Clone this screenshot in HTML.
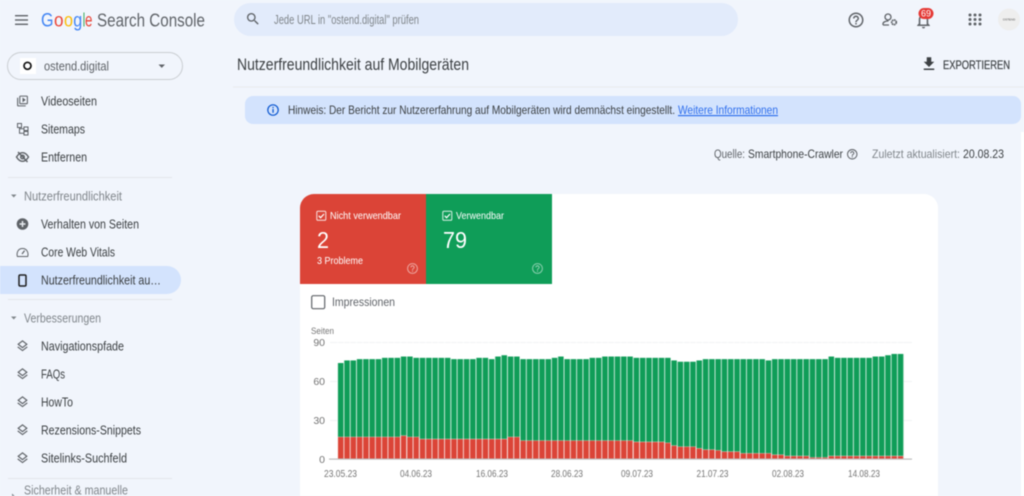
<!DOCTYPE html>
<html lang="de">
<head>
<meta charset="utf-8">
<title>Google Search Console</title>
<style>
html,body{margin:0;padding:0;background:#f1f5fc;overflow:hidden;width:1024px;height:496px}
svg{display:block;filter:blur(.4px)}
text{font-family:"Liberation Sans",Arial,sans-serif;font-size:12px;fill:#444746}
.n{font-size:12.5px;fill:#3c4043}
.s{font-size:12.5px;fill:#80868b}
.a{font-size:10.5px;fill:#757575}
.lg{font-size:19px}
</style>
</head>
<body>
<svg width="1024" height="496" viewBox="0 0 1024 496" xmlns="http://www.w3.org/2000/svg">
<defs>
<symbol id="help" viewBox="0 0 24 24"><path d="M11 18h2v-2h-2v2zm1-16C6.48 2 2 6.48 2 12s4.48 10 10 10 10-4.48 10-10S17.52 2 12 2zm0 18c-4.41 0-8-3.59-8-8s3.59-8 8-8 8 3.59 8 8-3.59 8-8 8zm0-14c-2.21 0-4 1.79-4 4h2c0-1.1.9-2 2-2s2 .9 2 2c0 2-3 1.75-3 5h2c0-2.25 3-2.5 3-5 0-2.21-1.79-4-4-4z"/></symbol>
<symbol id="layers" viewBox="0 0 24 24"><path fill="#5f6368" d="M11.99 18.54l-7.37-5.73L3 14.07l9 7 9-7-1.63-1.27zM12 16l7.36-5.73L21 9l-9-7-9 7 1.63 1.27L12 16zm0-11.47L17.74 9 12 13.47 6.26 9 12 4.53z"/></symbol>
<pattern id="gaps" patternUnits="userSpaceOnUse" x="337.1" y="0" width="6.29" height="10"><rect x="0" y="0" width="1" height="10" fill="#fff" fill-opacity=".75"/></pattern>
</defs>

<rect width="1024" height="496" fill="#f1f5fc"/>

<!-- header -->
<g fill="#5f6368"><rect x="15" y="15" width="13" height="1.4"/><rect x="15" y="19.3" width="13" height="1.4"/><rect x="15" y="23.6" width="13" height="1.4"/></g>
<text x="41" y="26.5" class="lg" textLength="12.5" lengthAdjust="spacingAndGlyphs" style="fill:#4285f4">G</text>
<text x="54" y="26.5" class="lg" textLength="9.5" lengthAdjust="spacingAndGlyphs" style="fill:#ea4335">o</text>
<text x="64" y="26.5" class="lg" textLength="9" lengthAdjust="spacingAndGlyphs" style="fill:#fbbc05">o</text>
<text x="73.3" y="26.5" class="lg" textLength="9" lengthAdjust="spacingAndGlyphs" style="fill:#4285f4">g</text>
<text x="82.8" y="26.5" class="lg" textLength="2.4" lengthAdjust="spacingAndGlyphs" style="fill:#34a853">l</text>
<text x="85" y="26.5" class="lg" textLength="7.4" lengthAdjust="spacingAndGlyphs" style="fill:#ea4335">e</text>
<text x="97" y="26.5" textLength="108" lengthAdjust="spacingAndGlyphs" style="font-size:18.5px;fill:#5f6368">Search Console</text>

<rect x="234" y="3" width="504" height="33" rx="16.5" fill="#e2ebfb"/>
<svg x="245" y="11" width="16" height="16" viewBox="0 0 24 24"><path fill="#5f6368" d="M15.5 14h-.79l-.28-.27C15.41 12.59 16 11.11 16 9.5 16 5.91 13.09 3 9.5 3S3 5.91 3 9.5 5.91 16 9.5 16c1.61 0 3.09-.59 4.23-1.57l.27.28v.79l5 4.99L20.49 19l-4.99-5zm-6 0C7.01 14 5 11.99 5 9.5S7.01 5 9.5 5 14 7.01 14 9.5 11.99 14 9.5 14z"/></svg>
<text x="274" y="24" textLength="145" lengthAdjust="spacingAndGlyphs" style="font-size:13px;fill:#80868b">Jede URL in "ostend.digital" prüfen</text>

<use href="#help" x="847" y="11" width="18" height="18" fill="#5f6368"/>
<!-- manage user -->
<g fill="none" stroke="#5f6368" stroke-width="1.3"><circle cx="888" cy="17" r="3"/><path d="M883 25v-1.2c0-1.8 2.6-2.8 5.5-2.8M883 25h6"/></g>
<circle cx="894" cy="22.3" r="2.3" fill="none" stroke="#5f6368" stroke-width="1.7" stroke-dasharray="1.6 .5"/>
<!-- bell -->
<svg x="914" y="11" width="19" height="19" viewBox="0 0 24 24"><path fill="#5f6368" d="M18 16v-5c0-3.07-1.63-5.64-4.5-6.32V4c0-.83-.67-1.5-1.5-1.5s-1.5.67-1.5 1.5v.68C7.64 5.36 6 7.92 6 11v5l-2 2v1h16v-1l-2-2zm-2 1H8v-6c0-2.48 1.51-4.5 4-4.5s4 2.02 4 4.5v6zM12 22c1.1 0 2-.9 2-2h-4c0 1.1.9 2 2 2z"/></svg>
<rect x="918.5" y="8" width="15" height="11" rx="5.5" fill="#e53935"/>
<text x="926" y="16.6" text-anchor="middle" style="font-size:9px;fill:#fff">69</text>
<!-- apps -->
<g fill="#5f6368"><circle cx="970" cy="15" r="1.5"/><circle cx="975" cy="15" r="1.5"/><circle cx="980" cy="15" r="1.5"/><circle cx="970" cy="19.5" r="1.5"/><circle cx="975" cy="19.5" r="1.5"/><circle cx="980" cy="19.5" r="1.5"/><circle cx="970" cy="24" r="1.5"/><circle cx="975" cy="24" r="1.5"/><circle cx="980" cy="24" r="1.5"/></g>
<circle cx="1009" cy="19.5" r="11" fill="#eeeeee"/>
<text x="1009" y="20.5" text-anchor="middle" style="font-size:3px;fill:#555">OSTEND</text>

<!-- sidebar -->
<rect x="7.5" y="52.5" width="175" height="27" rx="13.5" fill="#f1f5fc" stroke="#c9cdd1"/>
<rect x="20" y="58" width="16" height="16" fill="#fff"/>
<circle cx="27.5" cy="65.8" r="3.5" fill="none" stroke="#111" stroke-width="1.7"/>
<text x="44" y="70.5" textLength="65" lengthAdjust="spacingAndGlyphs" style="font-size:12.5px;fill:#5f6368">ostend.digital</text>
<path d="M158.5 64.5h6.5l-3.25 3.4z" fill="#5f6368"/>

<!-- Videoseiten icon -->
<svg x="16" y="94.5" width="13" height="13" viewBox="0 0 24 24"><path fill="#5f6368" d="M4 6H2v14c0 1.1.9 2 2 2h14v-2H4V6zm16-4H8c-1.1 0-2 .9-2 2v12c0 1.1.9 2 2 2h12c1.1 0 2-.9 2-2V4c0-1.1-.9-2-2-2zm0 14H8V4h12v12zM12 5.5v9l6-4.5z"/></svg>
<text x="41" y="105.5" textLength="56" lengthAdjust="spacingAndGlyphs" class="n">Videoseiten</text>
<!-- Sitemap icon -->
<g fill="none" stroke="#5f6368" stroke-width="1"><rect x="17.5" y="123.5" width="4" height="4"/><rect x="24" y="127" width="4" height="3.5"/><rect x="24" y="131.5" width="4" height="3.5"/><path d="M19.5 127.5v5.7h4.5M19.5 128.7h4.5"/></g>
<text x="41" y="133.5" textLength="44" lengthAdjust="spacingAndGlyphs" class="n">Sitemaps</text>
<!-- Eye off -->
<g fill="none" stroke="#5f6368" stroke-width="1.4"><path d="M16.5 157c2-3.2 4-4.3 6-4.3s4 1.1 6 4.3c-2 3.2-4 4.3-6 4.3s-4-1.1-6-4.3z"/><circle cx="22.5" cy="157" r="1.8"/><path d="M18 152l9.5 10"/></g>
<text x="41" y="161.5" textLength="46" lengthAdjust="spacingAndGlyphs" class="n">Entfernen</text>

<rect x="8" y="177" width="164" height="1" fill="#e3e6eb"/>
<path d="M11 194.5h5.5l-2.75 3z" fill="#80868b"/>
<text x="24" y="200.5" textLength="98" lengthAdjust="spacingAndGlyphs" class="s">Nutzerfreundlichkeit</text>

<circle cx="22.5" cy="224" r="5.8" fill="#5f6368"/>
<path d="M22.5 221v6M19.5 224h6" stroke="#e8ebf0" stroke-width="1.5"/>
<text x="41" y="228.5" textLength="98" lengthAdjust="spacingAndGlyphs" class="n">Verhalten von Seiten</text>
<g fill="none" stroke="#5f6368" stroke-width="1"><path d="M17.4 256.5h10.3c1-3.5-.5-8-5.2-8s-6.1 4.5-5.1 8z"/><path d="M22 254l2.6-3.4" stroke-width="1.2"/></g>
<text x="41" y="256.5" textLength="74" lengthAdjust="spacingAndGlyphs" class="n">Core Web Vitals</text>

<path d="M0 266H167a14 14 0 0 1 0 28H0z" fill="#d3e3fd"/>
<rect x="19" y="275" width="7" height="11" rx="1.2" fill="none" stroke="#1f1f1f" stroke-width="1.5"/>
<text x="41" y="284.5" textLength="120" lengthAdjust="spacingAndGlyphs" class="n">Nutzerfreundlichkeit au…</text>

<rect x="8" y="299" width="164" height="1" fill="#e3e6eb"/>
<path d="M11 316.5h5.5l-2.75 3z" fill="#80868b"/>
<text x="24" y="322.5" textLength="77" lengthAdjust="spacingAndGlyphs" class="s">Verbesserungen</text>

<use href="#layers" x="15.5" y="339" width="14" height="14"/>
<text x="41" y="350.5" textLength="83" lengthAdjust="spacingAndGlyphs" class="n">Navigationspfade</text>
<use href="#layers" x="15.5" y="367" width="14" height="14"/>
<text x="41" y="378.5" textLength="24" lengthAdjust="spacingAndGlyphs" class="n">FAQs</text>
<use href="#layers" x="15.5" y="395" width="14" height="14"/>
<text x="41" y="406.5" textLength="32" lengthAdjust="spacingAndGlyphs" class="n">HowTo</text>
<use href="#layers" x="15.5" y="423" width="14" height="14"/>
<text x="41" y="434.5" textLength="100" lengthAdjust="spacingAndGlyphs" class="n">Rezensions-Snippets</text>
<use href="#layers" x="15.5" y="451" width="14" height="14"/>
<text x="41" y="462.5" textLength="86" lengthAdjust="spacingAndGlyphs" class="n">Sitelinks-Suchfeld</text>

<rect x="8" y="478" width="164" height="1" fill="#e3e6eb"/>
<text x="24" y="494.5" textLength="104" lengthAdjust="spacingAndGlyphs" class="s">Sicherheit &amp; manuelle</text>
<path d="M12 493.5l3 2.75-3 2.75z" fill="#80868b"/>

<!-- main head -->
<text x="237" y="70" textLength="232" lengthAdjust="spacingAndGlyphs" style="font-size:16.5px;fill:#3c4043">Nutzerfreundlichkeit auf Mobilgeräten</text>
<svg x="920" y="55" width="18" height="18" viewBox="0 0 24 24"><path fill="#3c4043" d="M19 9h-4V3H9v6H5l7 7 7-7zM5 18v2h14v-2H5z"/></svg>
<text x="943" y="69" textLength="67" lengthAdjust="spacingAndGlyphs" style="font-size:12px;fill:#3c4043;stroke:#3c4043;stroke-width:.2">EXPORTIEREN</text>
<rect x="233" y="86.5" width="791" height="1" fill="#e8eaed"/>

<rect x="245" y="96" width="776" height="28" rx="8" fill="#d3e3fd"/>
<circle cx="273" cy="110" r="5.2" fill="none" stroke="#0b57d0" stroke-width="1.2"/>
<rect x="272.4" y="109" width="1.3" height="3.8" fill="#0b57d0"/><rect x="272.4" y="106.8" width="1.3" height="1.3" fill="#0b57d0"/>
<text x="288" y="114" textLength="387" lengthAdjust="spacingAndGlyphs" style="font-size:12px;fill:#3c4043">Hinweis: Der Bericht zur Nutzererfahrung auf Mobilgeräten wird demnächst eingestellt.</text>
<text x="678" y="114" textLength="100" lengthAdjust="spacingAndGlyphs" style="font-size:12px;fill:#2f6fed;text-decoration:underline">Weitere Informationen</text>

<rect x="1021" y="132" width="3" height="364" fill="#fff"/>
<text x="714" y="158" textLength="31" lengthAdjust="spacingAndGlyphs" style="font-size:11.5px;fill:#5f6368">Quelle:</text>
<text x="748" y="158" textLength="95" lengthAdjust="spacingAndGlyphs" style="font-size:12px;fill:#3c4043">Smartphone-Crawler</text>
<use href="#help" x="846" y="148" width="12.5" height="12.5" fill="#5f6368"/>
<text x="872" y="158" textLength="88" lengthAdjust="spacingAndGlyphs" style="font-size:12px;fill:#80868b">Zuletzt aktualisiert:</text>
<text x="963" y="158" textLength="41" lengthAdjust="spacingAndGlyphs" style="font-size:12px;fill:#3c4043">20.08.23</text>

<!-- card -->
<path d="M314 194H924a14 14 0 0 1 14 14V496H300V208a14 14 0 0 1 14-14z" fill="#fff"/>
<path d="M314 194H426V284H300V208a14 14 0 0 1 14-14z" fill="#db4437"/>
<rect x="426" y="194" width="126" height="90" fill="#0f9d58"/>

<g fill="none" stroke="#fff">
<rect x="316.8" y="211.3" width="9" height="9" rx="1.2" stroke-opacity=".85"/><path d="M318.7 215.8l1.9 1.9 3.4-3.7" stroke-width="1.2"/>
<rect x="442.8" y="211.3" width="9" height="9" rx="1.2" stroke-opacity=".85"/><path d="M444.7 215.8l1.9 1.9 3.4-3.7" stroke-width="1.2"/>
</g>
<text x="330" y="219" textLength="71" lengthAdjust="spacingAndGlyphs" style="font-size:10.5px;fill:#fff">Nicht verwendbar</text>
<text x="456" y="219" textLength="48" lengthAdjust="spacingAndGlyphs" style="font-size:10.5px;fill:#fff">Verwendbar</text>
<text x="317" y="248" textLength="12" lengthAdjust="spacingAndGlyphs" style="font-size:23px;fill:#fff">2</text>
<text x="443" y="248" textLength="24" lengthAdjust="spacingAndGlyphs" style="font-size:23px;fill:#fff">79</text>
<text x="317" y="264" textLength="46" lengthAdjust="spacingAndGlyphs" style="font-size:10.5px;fill:#fff">3 Probleme</text>
<use href="#help" x="406" y="262" width="13" height="13" fill="#fff" fill-opacity=".5"/>
<use href="#help" x="531" y="262" width="13" height="13" fill="#fff" fill-opacity=".5"/>

<rect x="311.7" y="295.7" width="13" height="13" rx="1.5" fill="#fff" stroke="#5f6368" stroke-width="1.2"/>
<text x="332" y="306" textLength="63" lengthAdjust="spacingAndGlyphs" style="font-size:12px;fill:#5f6368">Impressionen</text>

<!-- chart -->
<text x="311" y="334" textLength="23" lengthAdjust="spacingAndGlyphs" style="font-size:9.5px;fill:#757575">Seiten</text>
<g fill="#f1f3f4"><rect x="330" y="342" width="582" height="1"/><rect x="330" y="381" width="582" height="1"/><rect x="330" y="420" width="582" height="1"/></g>
<text x="325" y="346" text-anchor="end" class="a">90</text>
<text x="325" y="385" text-anchor="end" class="a">60</text>
<text x="325" y="424" text-anchor="end" class="a">30</text>
<text x="325" y="463" text-anchor="end" class="a">0</text>

<g transform="translate(337.5,459) scale(6.29,-1.297)" fill="#0f9d58">
<rect x="0" width="1" height="74"/><rect x="1" width="2" height="76"/><rect x="3" width="4" height="77"/><rect x="7" width="3" height="78"/><rect x="10" width="2" height="79"/><rect x="12" width="6" height="78"/><rect x="18" width="4" height="77"/><rect x="22" width="2" height="78"/><rect x="24" width="1" height="77"/><rect x="25" width="1" height="79"/><rect x="26" width="1" height="80"/><rect x="27" width="2" height="79"/><rect x="29" width="5" height="77"/><rect x="34" width="1" height="78"/><rect x="35" width="1" height="79"/><rect x="36" width="4" height="77"/><rect x="40" width="2" height="78"/><rect x="42" width="5" height="79"/><rect x="47" width="6" height="78"/><rect x="53" width="1" height="76"/><rect x="54" width="3" height="75"/><rect x="57" width="1" height="76"/><rect x="58" width="10" height="77"/><rect x="68" width="1" height="76"/><rect x="69" width="9" height="77"/><rect x="78" width="1" height="79"/><rect x="79" width="6" height="78"/><rect x="85" width="2" height="79"/><rect x="87" width="1" height="80"/><rect x="88" width="2" height="81"/>
</g>
<g transform="translate(337.5,459) scale(6.29,-1.297)" fill="#db4437" stroke="#fff" stroke-opacity=".45" stroke-width=".7">
<rect vector-effect="non-scaling-stroke" x="0" width="10" height="17"/><rect vector-effect="non-scaling-stroke" x="10" width="1" height="18"/><rect vector-effect="non-scaling-stroke" x="11" width="2" height="17"/><rect vector-effect="non-scaling-stroke" x="13" width="14" height="15.4"/><rect vector-effect="non-scaling-stroke" x="27" width="2" height="17"/><rect vector-effect="non-scaling-stroke" x="29" width="18" height="14.2"/><rect vector-effect="non-scaling-stroke" x="47" width="5" height="13.2"/><rect vector-effect="non-scaling-stroke" x="52" width="1" height="12.5"/><rect vector-effect="non-scaling-stroke" x="53" width="1" height="10.3"/><rect vector-effect="non-scaling-stroke" x="54" width="3" height="9.5"/><rect vector-effect="non-scaling-stroke" x="57" width="1" height="8.2"/><rect vector-effect="non-scaling-stroke" x="58" width="2" height="7.2"/><rect vector-effect="non-scaling-stroke" x="60" width="1" height="6.7"/><rect vector-effect="non-scaling-stroke" x="61" width="3" height="5.7"/><rect vector-effect="non-scaling-stroke" x="64" width="5" height="4.4"/><rect vector-effect="non-scaling-stroke" x="69" width="2" height="3.3"/><rect vector-effect="non-scaling-stroke" x="71" width="4" height="2.3"/><rect vector-effect="non-scaling-stroke" x="75" width="3" height="1.2"/><rect vector-effect="non-scaling-stroke" x="78" width="12" height="2.3"/>
</g>
<rect x="337.1" y="340" width="566.5" height="119" fill="url(#gaps)"/>
<rect x="329" y="458.5" width="583" height="1.2" fill="#bdbdbd"/>

<text x="324" y="477" textLength="33" lengthAdjust="spacingAndGlyphs" class="a">23.05.23</text>
<text x="400" y="477" textLength="32" lengthAdjust="spacingAndGlyphs" class="a">04.06.23</text>
<text x="476" y="477" textLength="32" lengthAdjust="spacingAndGlyphs" class="a">16.06.23</text>
<text x="551" y="477" textLength="32" lengthAdjust="spacingAndGlyphs" class="a">28.06.23</text>
<text x="621" y="477" textLength="32" lengthAdjust="spacingAndGlyphs" class="a">09.07.23</text>
<text x="696.5" y="477" textLength="32" lengthAdjust="spacingAndGlyphs" class="a">21.07.23</text>
<text x="772" y="477" textLength="32" lengthAdjust="spacingAndGlyphs" class="a">02.08.23</text>
<text x="848" y="477" textLength="32" lengthAdjust="spacingAndGlyphs" class="a">14.08.23</text>
</svg>
</body>
</html>
